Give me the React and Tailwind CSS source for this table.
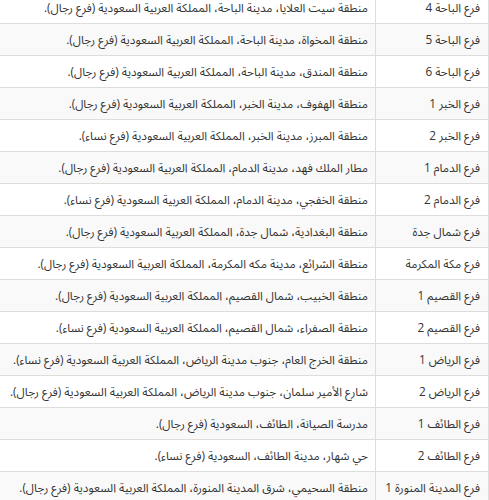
const rows = [
  ["فرع الباحة 4", "منطقة سيت العلايا، مدينة الباحة، المملكة العربية السعودية (فرع رجال)."],
  ["فرع الباحة 5", "منطقة المخواة، مدينة الباحة، المملكة العربية السعودية (فرع رجال)."],
  ["فرع الباحة 6", "منطقة المندق، مدينة الباحة، المملكة العربية السعودية (فرع رجال)."],
  ["فرع الخبر 1", "منطقة الهفوف، مدينة الخبر، المملكة العربية السعودية (فرع رجال)."],
  ["فرع الخبر 2", "منطقة المبرز، مدينة الخبر، المملكة العربية السعودية (فرع نساء)."],
  ["فرع الدمام 1", "مطار الملك فهد، مدينة الدمام، المملكة العربية السعودية (فرع رجال)."],
  ["فرع الدمام 2", "منطقة الخفجي، مدينة الدمام، المملكة العربية السعودية (فرع نساء)."],
  ["فرع شمال جدة", "منطقة البغدادية، شمال جدة، المملكة العربية السعودية (فرع رجال)."],
  ["فرع مكة المكرمة", "منطقة الشرائع، مدينة مكه المكرمة، المملكة العربية السعودية (فرع رجال)."],
  ["فرع القصيم 1", "منطقة الخبيب، شمال القصيم، المملكة العربية السعودية (فرع رجال)."],
  ["فرع القصيم 2", "منطقة الصفراء، شمال القصيم، المملكة العربية السعودية (فرع نساء)."],
  ["فرع الرياض 1", "منطقة الخرج العام، جنوب مدينة الرياض، المملكة العربية السعودية (فرع نساء)."],
  ["فرع الرياض 2", "شارع الأمير سلمان، جنوب مدينة الرياض، المملكة العربية السعودية (فرع رجال)."],
  ["فرع الطائف 1", "مدرسة الصيانة، الطائف، السعودية (فرع رجال)."],
  ["فرع الطائف 2", "حي شهار، مدينة الطائف، السعودية (فرع نساء)."],
  ["فرع المدينة المنورة 1", "منطقة السحيمي، شرق المدينة المنورة، المملكة العربية السعودية (فرع رجال)."],
];

export default function App() {
  return (
    <div className="w-[489px] h-[500px] overflow-hidden bg-white">
      <div dir="rtl" className="-mt-[9px] w-[489px] text-[11.75px] text-[#333333] font-['Open_Sans','Noto_Sans_Arabic','DejaVu_Sans',sans-serif]">
        {rows.map(([name, addr], i) => (
          <div
            key={i}
            className={`grid grid-cols-[114px_1fr] h-[32px] border-t border-[#dddddd] ${i % 2 === 1 ? "bg-[#f9f9f9]" : "bg-white"}`}
          >
            <div className="flex items-center pr-[8px] border-r border-l border-[#dddddd] whitespace-nowrap">{name}</div>
            <div className="flex items-center pr-[7px] whitespace-nowrap">{addr}</div>
          </div>
        ))}
      </div>
    </div>
  );
}
